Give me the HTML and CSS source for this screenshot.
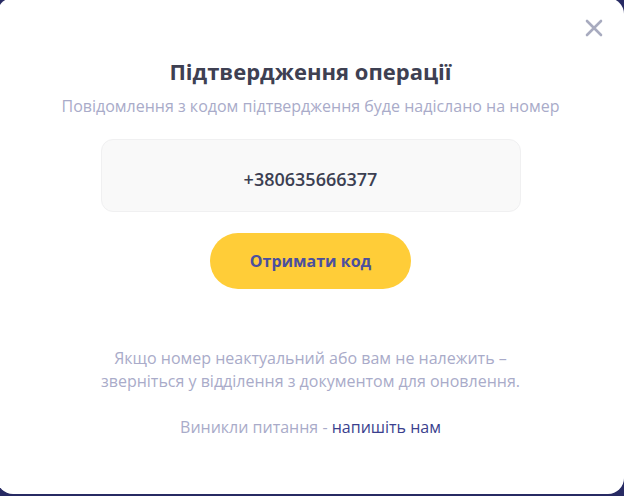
FILE: index.html
```html
<!DOCTYPE html>
<html lang="uk">
<head>
<meta charset="utf-8">
<link rel="stylesheet" href="styles.css">
</head>
<body>
<div class="modal">
  <button class="close" aria-label="Закрити">
    <svg width="18" height="18" viewBox="0 0 18 18"><path d="M2 2L16 16M16 2L2 16" stroke="#a8abbf" stroke-width="2.6" stroke-linecap="round"/></svg>
  </button>
  <h1 class="title">Підтвердження операції</h1>
  <p class="subtitle">Повідомлення з кодом підтвердження буде надіслано на номер</p>
  <div class="phone">+380635666377</div>
  <button class="cta">Отримати код</button>
  <p class="note">Якщо номер неактуальний або вам не належить –<br>зверніться у відділення з документом для оновлення.</p>
  <p class="help">Виникли питання - <a class="link" href="#">напишіть нам</a></p>
</div>
</body>
</html>
```
FILE: styles.css
```css
html, body {
  margin: 0;
  padding: 0;
  height: 100%;
  overflow: hidden;
}
body {
  background: #272a63;
  font-family: "Open Sans", "Noto Sans", sans-serif;
}
.modal {
  position: relative;
  box-sizing: border-box;
  margin: -2px 0 0 -3px;
  width: 627px;
  height: 496px;
  background: #ffffff;
  border-radius: 16px;
  padding-top: 59px;
  display: flex;
  flex-direction: column;
  align-items: center;
}
.close {
  position: absolute;
  top: 21px;
  right: 21px;
  width: 18px;
  height: 18px;
  padding: 0;
  border: 0;
  background: none;
  display: flex;
}
.title {
  margin: 0;
  font-size: 22px;
  line-height: 28px;
  font-weight: 700;
  color: #3e4052;
}
.subtitle {
  margin: 10px 0 0;
  font-size: 16px;
  line-height: 22px;
  color: #a9abc9;
}
.phone {
  box-sizing: border-box;
  margin-top: 22px;
  width: 420px;
  height: 73px;
  background: #f9f9f9;
  border: 1px solid #f0f0f1;
  border-radius: 12px;
  display: flex;
  align-items: center;
  justify-content: center;
  padding-top: 6px;
  font-size: 18px;
  font-weight: 600;
  color: #3c3f52;
}
.cta {
  margin-top: 21px;
  width: 201px;
  height: 56px;
  border: 0;
  border-radius: 28px;
  background: #ffcd38;
  font-family: inherit;
  font-size: 16px;
  font-weight: 700;
  color: #4b4f9e;
  padding: 0;
}
.note {
  margin: 58px 0 0;
  text-align: center;
  font-size: 16px;
  line-height: 23px;
  color: #a9abc9;
}
.help {
  margin: 23px 0 0;
  font-size: 16px;
  line-height: 23px;
  color: #a9abc9;
}
.link {
  color: #3b3f8e;
  text-decoration: none;
}
```
